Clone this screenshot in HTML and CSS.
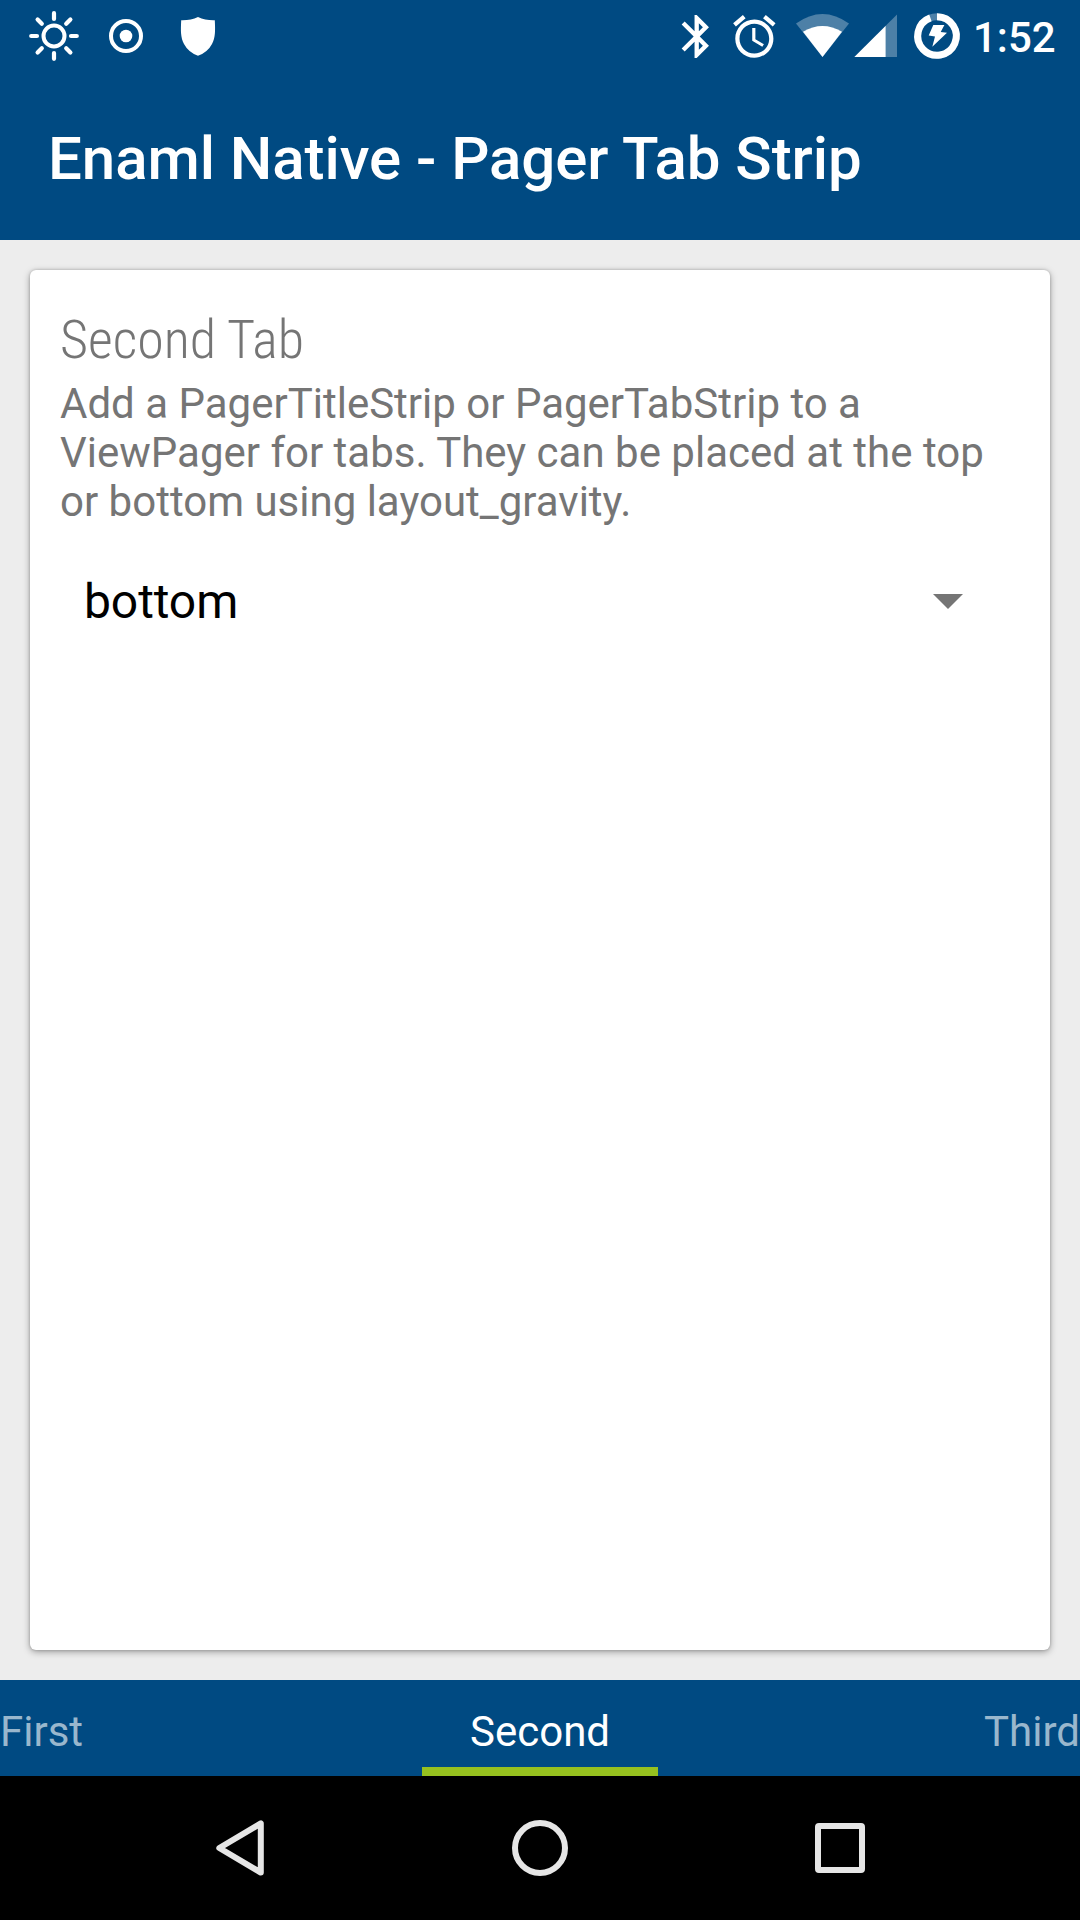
FILE: index.html
```html
<!DOCTYPE html>
<html lang="en">
<head>
<meta charset="utf-8">
<title>Enaml Native - Pager Tab Strip</title>
<link rel="stylesheet" href="styles.css">
</head>
<body>
<div class="screen">
  <div class="status-bar">
    <svg class="icon-72" viewBox="-36 -36 72 72">
      <circle r="10.5" fill="none" stroke="#fff" stroke-width="4"/>
      <g stroke="#fff" stroke-width="4.2" stroke-linecap="round">
        <path d="M0-22.8V-17M0 17V22.8M-22.8 0H-17M17 0H22.8"/>
        <path d="M-16.4-16.4L-12.2-12.2M16.4-16.4L12.2-12.2M-16.4 16.4L-12.2 12.2M16.4 16.4L12.2 12.2"/>
      </g>
    </svg>
    <svg class="icon-72" viewBox="-36 -36 72 72">
      <circle r="15" fill="none" stroke="#fff" stroke-width="4"/>
      <circle r="6.3" fill="#fff"/>
    </svg>
    <svg class="icon-72" viewBox="-36 -36 72 72">
      <path fill="#fff" d="M0-19Q-7.500-15.500-16.800-15.800C-17.300-5-17.500 1-14 8Q-9.500 16.500 0 19.700Q9.500 16.500 14 8C17.500 1 17.300-5 16.800-15.800Q7.500-15.500 0-19Z"/>
    </svg>
    <span class="spacer"></span>
    <svg class="bluetooth" viewBox="0 0 54 72">
      <path fill="#fff" transform="translate(.9 10.700) scale(2.150)" d="M17.710 7.710L12 2h-1v7.590L6.410 5 5 6.410 10.590 12 5 17.590 6.410 19 11 14.410V22h1l5.710-5.710-4.300-4.290 4.300-4.290zM13 5.830l1.880 1.880L13 9.590V5.830zm1.880 10.460L13 18.170v-3.760l1.880 1.880z"/>
    </svg>
    <svg class="alarm" viewBox="0 0 60 72">
      <path fill="#fff" transform="translate(4.900 11.100) scale(2.120)" d="M22 5.720l-4.600-3.860-1.290 1.530 4.600 3.860L22 5.720zM7.880 3.390L6.600 1.860 2 5.710l1.290 1.530 4.590-3.850zM12.500 8H11v6l4.750 2.850.75-1.230-4-2.370V8zM12 4c-4.970 0-9 4.030-9 9s4.020 9 9 9c4.970 0 9-4.030 9-9s-4.030-9-9-9zm0 16c-3.870 0-7-3.130-7-7s3.130-7 7-7 7 3.130 7 7-3.130 7-7 7z"/>
    </svg>
    <svg class="wifi" viewBox="0 0 66 72">
      <path class="dim" d="M12 23.500Q38.500 4.500 65 23.500L38.500 57Z"/>
      <path fill="#fff" d="M19 31.800Q38.500 20 58 31.800L38.500 57Z"/>
    </svg>
    <svg class="signal" viewBox="0 0 60 72">
      <path class="dim" d="M35.700 25.700L47 14.400V57H35.700Z"/>
      <path fill="#fff" d="M4.300 57L35.700 25.700V57Z"/>
    </svg>
    <svg class="battery" viewBox="-27 -36 54 72">
      <circle class="dim-ring" r="19.300"/>
      <path fill="none" stroke="#fff" stroke-width="7" d="M0-19.300A19.300 19.300 0 1 1-6.600-18.140"/>
      <path fill="#fff" d="M-3.700-11H7.400L3.700-4L10-3.300L-4.700 10.700L-2 .500L-8.300-.500Z"/>
    </svg>
    <span class="clock">1:52</span>
  </div>
  <header class="app-bar"><h1 class="title">Enaml Native - Pager Tab Strip</h1></header>
  <main class="page">
    <section class="card">
      <h2 class="card-title">Second Tab</h2>
      <p class="card-text">Add a PagerTitleStrip or PagerTabStrip to a<br>ViewPager for tabs. They can be placed at the top<br>or bottom using layout_gravity.</p>
      <div class="spinner">
        <span>bottom</span>
        <svg class="caret" viewBox="0 0 30 15"><path fill="#757575" d="M0 0H30L15 15Z"/></svg>
      </div>
    </section>
  </main>
  <div class="tab-strip">
    <span class="tab">First</span>
    <span class="tab tab-active">Second</span>
    <span class="tab tab-last">Third</span>
  </div>
  <nav class="nav-bar">
    <svg class="nav-icon" viewBox="-36 -36 72 72"><path d="M20.800-24.600V24.600L-20.700 0Z"/></svg>
    <svg class="nav-icon" viewBox="-36 -36 72 72"><circle r="25"/></svg>
    <svg class="nav-icon" viewBox="-36 -36 72 72"><rect x="-22" y="-22" width="44" height="44" rx="1"/></svg>
  </nav>
</div>
</body>
</html>
```
FILE: styles.css
```css
* { box-sizing: border-box; }
body { margin: 0; font-family: Roboto, sans-serif; }
svg { display: block; flex: none; }

.screen {
  display: flex;
  flex-direction: column;
  width: 1080px;
  height: 1920px;
  overflow: hidden;
  background: #ededed;
}

.status-bar {
  display: flex;
  height: 72px;
  padding: 0 24px 0 18px;
  background: #004a82;
  color: #fff;
}
.icon-72 { width: 72px; height: 72px; }
.spacer { flex: 1; }
.bluetooth { width: 54px; height: 72px; }
.alarm { width: 60px; height: 72px; }
.wifi { width: 66px; height: 72px; }
.signal { width: 60px; height: 72px; }
.battery { width: 54px; height: 72px; }
.dim { fill: #fff; fill-opacity: .3; }
.dim-ring { fill: none; stroke: #4d80a8; stroke-width: 7; }
.clock {
  width: 83px;
  margin-left: 9px;
  font-size: 42px;
  font-weight: 500;
  line-height: 75px;
  white-space: nowrap;
}

.app-bar {
  height: 168px;
  padding: 5px 48px 0;
  background: #004a82;
}
.title {
  margin: 0;
  color: #fff;
  font-size: 60px;
  font-weight: 500;
  letter-spacing: -.06px;
  line-height: 163px;
  white-space: nowrap;
}

.page { flex: 1; display: flex; padding: 30px; }
.card {
  flex: 1;
  padding: 38px 30px;
  border-radius: 6px;
  background: #fff;
  box-shadow: 0 2px 7px rgba(0, 0, 0, .34), 0 0 3px rgba(0, 0, 0, .2);
}
.card-title {
  margin: 0;
  color: #757575;
  font-family: "Roboto Condensed", Roboto, sans-serif;
  font-size: 54px;
  font-weight: 300;
  font-stretch: 75%;
  line-height: 63px;
}
.card-text {
  margin: 8px 0 0;
  color: #757575;
  font-size: 42px;
  line-height: 49px;
  white-space: nowrap;
}
.spinner {
  display: flex;
  align-items: center;
  justify-content: space-between;
  height: 72px;
  margin-top: 39px;
  padding: 0 57px 0 24px;
  color: #000;
  font-size: 48px;
  letter-spacing: -.1px;
}
.caret { width: 30px; height: 15px; }

.tab-strip {
  display: grid;
  grid-template-columns: 1fr 236px 1fr;
  height: 96px;
  background: #004a82;
  color: #99b7cd;
  font-size: 42px;
  line-height: 103px;
}
.tab { height: 96px; }
.tab-active {
  border-bottom: 9px solid #96c11f;
  color: #fff;
  text-align: center;
}
.tab-last { text-align: right; }

.nav-bar {
  display: flex;
  align-items: center;
  justify-content: center;
  gap: 228px;
  height: 144px;
  background: #000;
}
.nav-icon {
  width: 72px;
  height: 72px;
  fill: none;
  stroke: #e6e6e6;
  stroke-width: 6;
  stroke-linejoin: round;
}
```
